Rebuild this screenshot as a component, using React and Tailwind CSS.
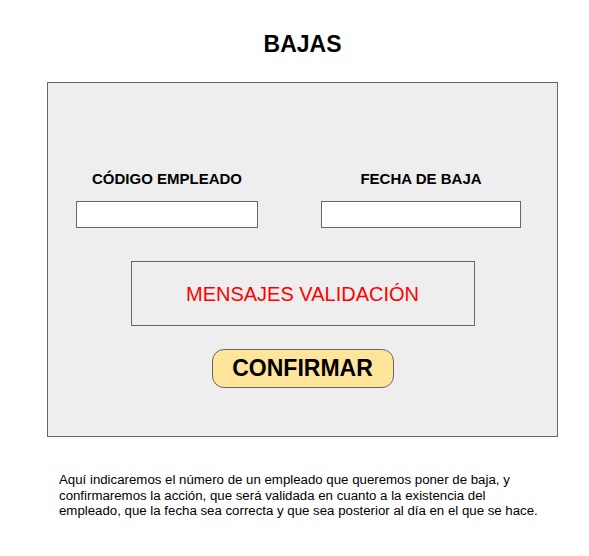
export default function App() {
  return (
    <div
      className="w-[589px] h-[556px] bg-white text-black overflow-hidden pt-[33px]"
      style={{ fontFamily: '"Liberation Sans", Arial, sans-serif' }}
    >
      <h1 className="ml-[47px] w-[511px] text-center text-[23px] leading-[23px] font-bold">BAJAS</h1>
      <div className="mt-[26px] ml-[47px] w-[511px] h-[355px] border border-[#666666] bg-[#eeeeee] pt-[88px]">
        <div className="flex pl-[28px]">
          <div className="w-[182px] flex flex-col items-center">
            <div className="text-[15px] leading-[15px] font-bold whitespace-nowrap">CÓDIGO EMPLEADO</div>
            <div className="mt-[15px] h-[27px] w-full border border-[#666666] bg-white"></div>
          </div>
          <div className="ml-[63px] w-[200px] flex flex-col items-center">
            <div className="text-[15px] leading-[15px] font-bold whitespace-nowrap">FECHA DE BAJA</div>
            <div className="mt-[15px] h-[27px] w-full border border-[#666666] bg-white"></div>
          </div>
        </div>
        <div className="mt-[33px] mx-auto w-[344px] h-[65px] border border-[#666666] flex items-center justify-center">
          <span className="text-[20px] text-[#ff0000] whitespace-nowrap">MENSAJES VALIDACIÓN</span>
        </div>
        <div className="mt-[23px] mx-auto w-[182px] h-[39px] rounded-[12px] border border-[#666666] bg-[#ffe599] flex items-center justify-center">
          <span className="text-[23px] font-bold whitespace-nowrap">CONFIRMAR</span>
        </div>
      </div>
      <p className="mt-[35px] ml-[59px] text-[13.25px] leading-[15.5px] whitespace-nowrap">
        Aquí indicaremos el número de un empleado que queremos poner de baja, y
        <br />
        confirmaremos la acción, que será validada en cuanto a la existencia del
        <br />
        empleado, que la fecha sea correcta y que sea posterior al día en el que se hace.
      </p>
    </div>
  );
}
